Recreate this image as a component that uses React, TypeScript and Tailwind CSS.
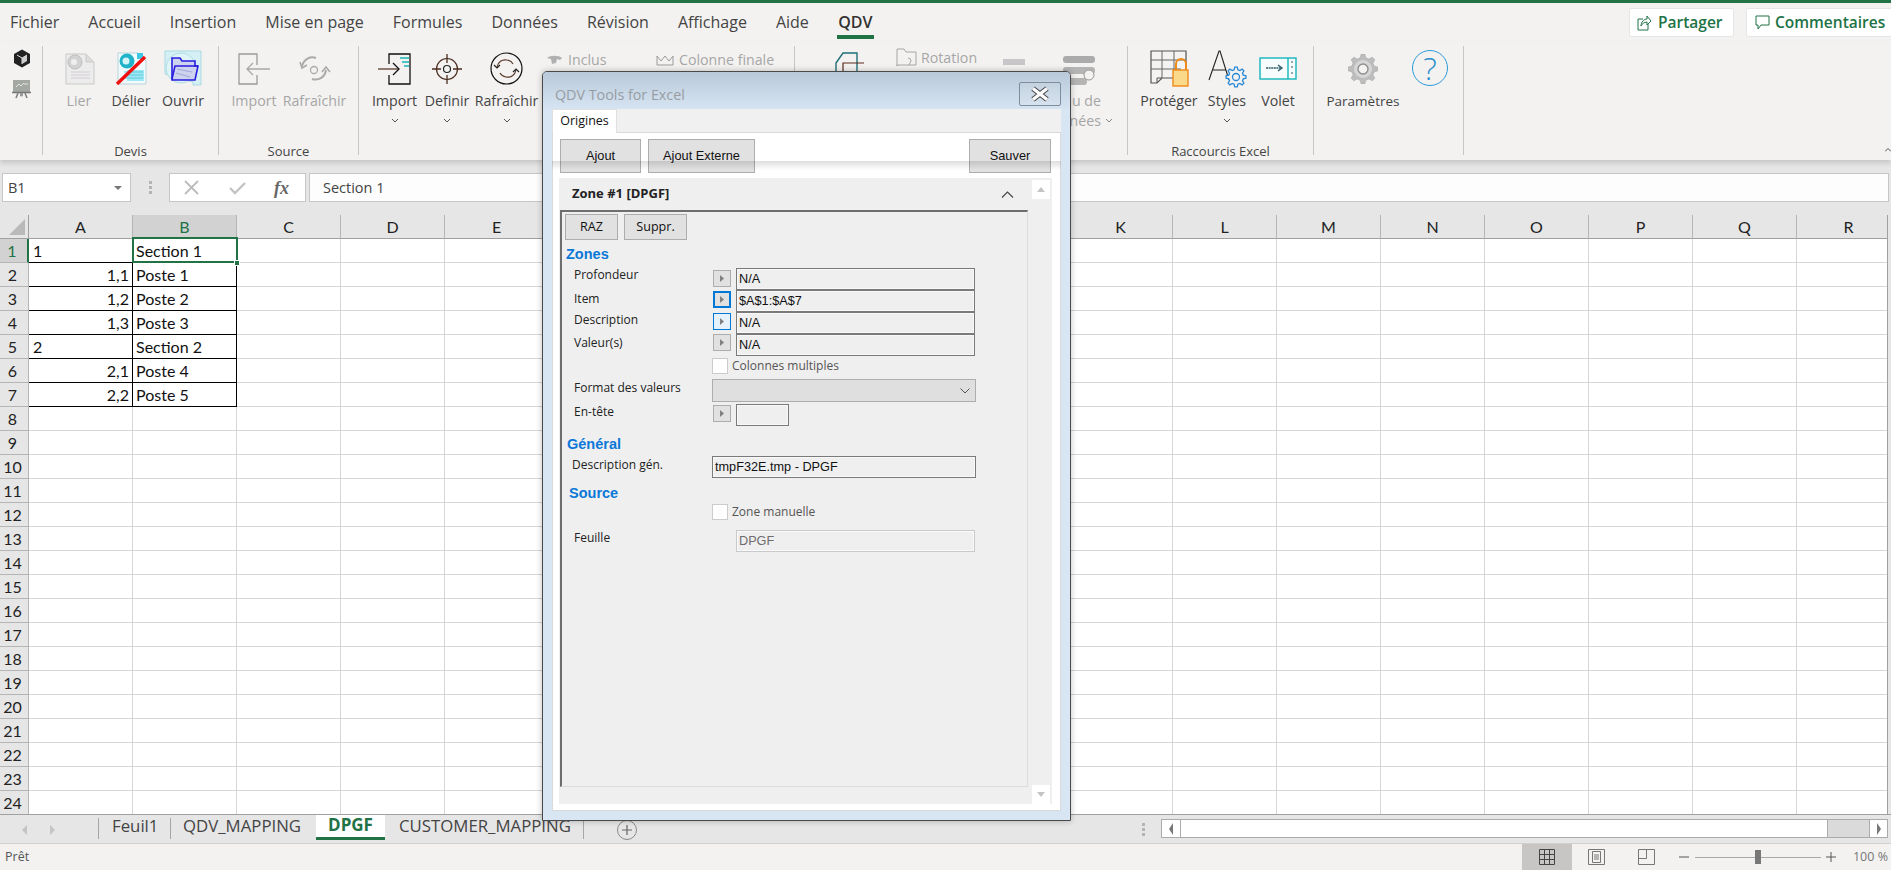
import React from "react";

const UI = "font-['Open_Sans',sans-serif]";
const CELL = "font-['Lato',sans-serif]";
const WIN = "font-['Liberation_Sans',Arial,sans-serif]";

function gear(cx: number, cy: number, ro: number, ri: number, n: number) {
  const pts: string[] = [];
  const step = (Math.PI * 2) / n;
  for (let i = 0; i < n; i++) {
    const a = i * step;
    const d = step * 0.22;
    [
      [a - d * 1.5, ri],
      [a - d * 0.7, ro],
      [a + d * 0.7, ro],
      [a + d * 1.5, ri],
    ].forEach(([t, r]) => pts.push(`${(cx + r * Math.cos(t)).toFixed(2)},${(cy + r * Math.sin(t)).toFixed(2)}`));
  }
  return pts.join(" ");
}

const Chev = ({ c = "#555" }: { c?: string }) => (
  <svg width="8" height="5" viewBox="0 0 8 5" className="block"><path d="M1 1l3 3 3-3" fill="none" stroke={c} strokeWidth="1" /></svg>
);

const RibBtn = ({ w, icon, label, gray, chevron, size = "text-[14.2px]" }: { w: string; icon: React.ReactNode; label: string; gray?: boolean; chevron?: boolean; size?: string }) => (
  <div className={`${w} shrink-0 flex flex-col items-center`}>
    <div className="h-[45px] flex items-center justify-center">{icon}</div>
    <div className={`h-[20px] leading-[20px] ${size} whitespace-nowrap ${gray ? "text-[#a6a6a6]" : "text-[#444444]"}`}>{label}</div>
    {chevron && <div className="h-[16px] flex items-center justify-center mt-[1px]"><Chev /></div>}
  </div>
);

const Sep = () => <div className="w-px h-[109px] shrink-0 bg-[#c8c6c4]" />;

const Group = ({ w, pl, label, children }: { w: string; pl: string; label?: string; children: React.ReactNode }) => (
  <div className={`${w} shrink-0 h-[113px] flex flex-col`}>
    <div className={`flex ${pl} h-[97px]`}>{children}</div>
    {label && <div className="h-[16px] leading-[16px] text-center text-[13px] text-[#444444] whitespace-nowrap">{label}</div>}
  </div>
);

const DocLier = () => (
  <svg width="32" height="32" viewBox="0 0 32 32" className="block">
    <path d="M3 1h20l8 8v22H3z" fill="#ececec" stroke="#c9c9c9" />
    <path d="M23 1v8h8" fill="#dcdcdc" stroke="#c9c9c9" />
    <circle cx="12" cy="9" r="7" fill="#d2d2d2" stroke="#bdbdbd" />
    <circle cx="11" cy="9" r="3" fill="#efefef" />
    <path d="M8 19h19M8 22h19M8 25h19" stroke="#d3cdd8" />
  </svg>
);
const DocDelier = () => (
  <svg width="32" height="33" viewBox="0 0 32 33" className="block">
    <path d="M3 1h20l8 8v23H3z" fill="#f1fbfd" stroke="#b9d3d8" />
    <path d="M22 1h6v6h-6z" fill="#3fc7e4" />
    <path d="M12 18h17v11H12z" fill="#9fe8f3" />
    <path d="M9 20h19M9 23h19M9 26h19" stroke="#5bcbe0" />
    <circle cx="12" cy="9" r="7.5" fill="#20b3c9" />
    <circle cx="11" cy="9" r="3.5" fill="#d3f4f8" />
    <path d="M2 32L30 5" stroke="#f01010" strokeWidth="3.4" />
  </svg>
);
const DocOuvrir = () => (
  <svg width="38" height="38" viewBox="0 0 38 38" className="block">
    <path d="M1 1h36v34H29v-3L1 24z" fill="#d5f0f4" stroke="#a9dbe3" />
    <circle cx="17" cy="18" r="15" fill="#dff4f7" stroke="#b0dde4" />
    <path d="M8 8h8l2 3h13v5h3l-3 14H8z" fill="#cdd3ee" stroke="#2a1de0" strokeWidth="1.6" />
    <path d="M8 29l3-13h23" fill="none" stroke="#2a1de0" strokeWidth="1.6" />
    <path d="M13 19l15 3M12 23l14 4" stroke="#9ea8d6" />
  </svg>
);
const ImportGray = () => (
  <svg width="32" height="32" viewBox="0 0 32 32" className="block" fill="none" stroke="#a8a8a8" strokeWidth="1.3">
    <path d="M19 12V1H1v30h18V22" stroke="#9a9a9a" />
    <path d="M32 16H9M15 10l-6 6 6 6" />
  </svg>
);
const RefreshGray = () => (
  <svg width="32" height="32" viewBox="0 0 32 32" className="block" fill="none" stroke="#aaaaaa" strokeWidth="2">
    <circle cx="15" cy="17" r="3.5" strokeWidth="1.3" />
    <path d="M3 13C5 6 11 3 17 5" />
    <path d="M1 9l2 6 5-3" strokeWidth="1.6" />
    <path d="M27 17c-1 7-7 11-14 9" />
    <path d="M31 19l-4-5-4 5" strokeWidth="1.6" />
  </svg>
);
const ImportDark = () => (
  <svg width="33" height="32" viewBox="0 0 33 32" className="block" fill="none">
    <path d="M11 11V1h21v30H11V22" stroke="#111" strokeWidth="1.3" />
    <path d="M0 16h21" stroke="#5a3a2a" strokeWidth="1.3" />
    <path d="M15 10l6 6-6 6" stroke="#111" strokeWidth="1.3" />
    <path d="M22 5h9M24 9h7M26 13h5" stroke="#19b5b5" strokeWidth="1.6" />
  </svg>
);
const Target = () => (
  <svg width="32" height="32" viewBox="0 0 32 32" className="block" fill="none" stroke="#4a2c1e" strokeWidth="1.2">
    <circle cx="16" cy="16" r="10.5" />
    <circle cx="16" cy="16" r="3.5" stroke="#222" />
    <path d="M16 1v9M16 22v9M1 16h9M22 16h9" strokeWidth="1.3" />
  </svg>
);
const RefreshDark = () => (
  <svg width="33" height="33" viewBox="0 0 33 33" className="block" fill="none">
    <circle cx="16.5" cy="16.5" r="15.5" stroke="#111" strokeWidth="1.2" />
    <path d="M7 15c1-5 5-8 10-7 3 .5 5 2 6 4" stroke="#5a3a2a" strokeWidth="1.2" />
    <path d="M26 18c-1 5-5 8-10 7-3-.5-5-2-6-4" stroke="#5a3a2a" strokeWidth="1.2" />
    <path d="M4 13l3 3 3-3M23 20l3-3 3 3" stroke="#222" strokeWidth="1.2" />
  </svg>
);
const Protect = () => (
  <svg width="39" height="37" viewBox="0 0 39 37" className="block" fill="none">
    <path d="M1 1h35v27H12l-5 5H1z" fill="#f4f3f1" stroke="#555" strokeWidth="1.2" />
    <path d="M1 10h35M1 19h30M12 1v27M24 1v20" stroke="#666" strokeWidth="1" />
    <path d="M7 33v-5h5" stroke="#555" />
    <path d="M26 21v-7a5 5 0 0110 0v7" stroke="#ee8a18" strokeWidth="2" />
    <rect x="23" y="20" width="15" height="16" fill="#fbd98b" stroke="#ee8a18" strokeWidth="1.4" />
  </svg>
);
const Styles = () => (
  <svg width="39" height="38" viewBox="0 0 39 38" className="block" fill="none">
    <path d="M1 30L11 1h1l9 29M5 20h13" stroke="#222" strokeWidth="1.1" />
    <polygon points={gear(28, 27, 10, 7.5, 8)} stroke="#2788d6" strokeWidth="1.3" fill="#f3f2f1" />
    <circle cx="28" cy="27" r="3.5" stroke="#2788d6" strokeWidth="1.3" />
  </svg>
);
const Volet = () => (
  <svg width="38" height="23" viewBox="0 0 38 23" className="block" fill="none">
    <rect x="1" y="1" width="36" height="21" fill="#f6fbfb" stroke="#15b6bd" strokeWidth="1.4" />
    <path d="M29 1v21" stroke="#15b6bd" strokeWidth="1.4" />
    <path d="M7 11h15" stroke="#2f5b66" strokeWidth="1.4" strokeDasharray="2 .6" />
    <path d="M19 8l4 3-4 3" stroke="#2f5b66" strokeWidth="1.3" />
    <path d="M32 5h2M32 10h2M32 16h2" stroke="#2f5b66" strokeWidth="1.2" />
  </svg>
);
const Settings = () => (
  <svg width="30" height="30" viewBox="0 0 30 30" className="block">
    <polygon points={gear(15, 15, 15, 11.5, 8)} fill="#bdbdbd" stroke="#a8a8a8" strokeWidth=".6" />
    <circle cx="15" cy="15" r="9" fill="#d6d6d6" />
    <circle cx="15" cy="15" r="5" fill="#f3f2f1" stroke="#8e8e8e" strokeWidth="1.4" />
  </svg>
);
const Cube = () => (
  <svg width="18" height="19" viewBox="0 0 18 19" className="block">
    <path d="M9 .5l8 4.5v9l-8 4.5-8-4.5V5z" fill="#222" />
    <path d="M4 6l5 3 5-3M9 9v6" stroke="#ddd" strokeWidth="1" fill="none" />
    <path d="M9 9l5-3v6l-5 3z" fill="#cfcfcf" />
  </svg>
);
const Board = () => (
  <svg width="19" height="20" viewBox="0 0 19 20" className="block">
    <rect x="1" y="1" width="17" height="12" fill="#a4a8a3" />
    <path d="M4 8l3-3 2 2 3-3M12 5h4" stroke="#e4e4e4" fill="none" />
    <path d="M0 13.5h19" stroke="#777" strokeWidth="1.5" />
    <path d="M4 19l2-5M15 19l-2-5M8 15h3" stroke="#808080" strokeWidth="1.6" />
    <circle cx="9.5" cy="16" r="1.6" fill="#9a9a9a" />
  </svg>
);
const SmallBtn = ({ active, hover }: { active?: boolean; hover?: boolean }) => (
  <div className={`w-[18px] shrink-0 flex items-center justify-center ${active ? "h-[17px] border-2 border-[#0078d7] bg-[#e1e1e1]" : hover ? "h-[17px] border border-[#0078d7] bg-[#e5f1fb]" : "h-[17px] border border-[#adadad] bg-[#e1e1e1]"}`}>
    <svg width="4" height="7" viewBox="0 0 4 7" className="block"><path d="M0 0l4 3.5L0 7z" fill="#808080" /></svg>
  </div>
);

const Field = ({ text, w = "w-[239px]", disabled }: { text: string; w?: string; disabled?: boolean }) => (
  <div className={`${w} h-[22px] shrink-0 border bg-[#efefef] shadow-[inset_0_0_0_1px_#f9f9f9] pl-[2px] leading-[21px] text-[12.7px] ${WIN} whitespace-nowrap ${disabled ? "border-[#c9c9c9] text-[#6d6d6d]" : "border-[#7a7a7a] text-[#111]"}`}>{text}</div>
);

const Lbl = ({ children, cls }: { children: React.ReactNode; cls: string }) => (
  <div className={`shrink-0 h-[16px] leading-[16px] text-[12px] text-[#222] whitespace-nowrap ${cls}`}>{children}</div>
);

const ZoneRow = ({ label, top, btnTop, text, active, hover }: { label: string; top: string; btnTop: string; text: string; active?: boolean; hover?: boolean }) => (
  <div className="flex h-[22px] pl-[12px]">
    <Lbl cls={`w-[139px] ${top}`}>{label}</Lbl>
    <div className={`mr-[5px] ${btnTop}`}><SmallBtn active={active} hover={hover} /></div>
    <Field text={text} />
  </div>
);

const Head = ({ children, cls }: { children: React.ReactNode; cls: string }) => (
  <div className={`h-[18px] leading-[18px] text-[14.5px] font-bold text-[#0a78d8] ${WIN} ${cls}`}>{children}</div>
);

const Check = ({ label, cls }: { label: string; cls: string }) => (
  <div className={`flex items-center h-[16px] pl-[150px] ${cls}`}>
    <div className="w-[16px] h-[16px] bg-white border border-[#cccccc] mr-[4px]" />
    <span className="text-[12px] text-[#555] whitespace-nowrap">{label}</span>
  </div>
);

const WinBtn = ({ w, label, cls = "" }: { w: string; label: string; cls?: string }) => (
  <div className={`${w} h-[34px] border border-[#adadad] bg-[#e1e1e1] flex items-center justify-center text-[12.8px] text-[#111] ${WIN} ${cls}`}>{label}</div>
);

const cols = "ABCDEFGHIJKLMNOPQR".split("");
const data: Record<number, [string, string, boolean]> = {
  1: ["1", "Section 1", false],
  2: ["1,1", "Poste 1", true],
  3: ["1,2", "Poste 2", true],
  4: ["1,3", "Poste 3", true],
  5: ["2", "Section 2", false],
  6: ["2,1", "Poste 4", true],
  7: ["2,2", "Poste 5", true],
};
const rows = Array.from({ length: 24 }, (_, i) => i + 1);

const Sheet = () => (
  <div className={`relative w-[1888px] h-[599px] overflow-hidden border-r border-[#a0a0a0] bg-white ${CELL} text-[16px] text-[#111]`}>
    <div className="grid grid-cols-[29px_repeat(18,104px)] grid-rows-[24px_repeat(24,24px)] w-[1901px]">
      <div className="bg-[#e6e6e6] border-b border-r border-[#a0a0a0] flex items-end justify-end pr-[3px] pb-[3px]">
        <div className="w-0 h-0 border-l-[16px] border-l-transparent border-b-[16px] border-b-[#b9b9b9]" />
      </div>
      {cols.map((c) => (
        <div key={c} className={`border-b border-r border-[#a0a0a0] border-r-[#b5b5b5] flex items-center justify-center leading-none ${c === "B" ? "bg-[#d2d2d2] text-[#217346]" : "bg-[#e6e6e6] text-[#222]"}`}>{c}</div>
      ))}
      {rows.map((r) => (
        <React.Fragment key={r}>
          <div className={`border-b border-r border-[#b5b5b5] flex items-center justify-center pr-[3px] leading-none ${r === 1 ? "bg-[#d2d2d2] text-[#217346] border-r-[#217346] border-r-2" : "bg-[#e6e6e6] text-[#222]"}`}>{r}</div>
          {cols.map((c) => {
            const d = data[r];
            const inTable = !!d && (c === "A" || c === "B");
            return (
              <div key={c} className={`border-b border-r flex items-center leading-none whitespace-nowrap ${inTable ? "border-[#000]" : "border-[#d6d6d6]"} ${d && c === "A" ? (d[2] ? "justify-end pr-[3px]" : "pl-[4px]") : "pl-[3px]"}`}>
                {d && c === "A" ? d[0] : d && c === "B" ? d[1] : ""}
              </div>
            );
          })}
        </React.Fragment>
      ))}
    </div>
    <div className="absolute left-[132px] top-[22px] w-[106px] h-[26px] border-2 border-[#217346]" />
    <div className="absolute left-[234px] top-[45px] w-[4px] h-[4px] bg-[#217346] border border-white box-content" />
  </div>
);

const Dialog = () => (
  <div className={`absolute z-20 left-[542px] top-[71px] w-[529px] h-[750px] flex flex-col rounded-t-[5px] border border-[#4a4a4a] bg-[#d8e5f3] shadow-[0_0_6px_rgba(0,0,0,0.25)] ${UI}`}>
    <div className="h-[37px] shrink-0 flex items-start justify-between rounded-t-[4px] bg-gradient-to-b from-[#b9c9d9] to-[#d6e4f2]">
      <div className={`mt-[14px] ml-[12px] text-[14.3px] leading-[18px] text-[#979da3] ${UI}`}>QDV Tools for Excel</div>
      <div className="mt-[10px] mr-[9px] w-[42px] h-[24px] rounded-[2px] border border-[#7f8c9c] bg-gradient-to-b from-[#c4d2e0] to-[#d6e2ee] flex items-center justify-center">
        <svg width="20" height="16" viewBox="0 0 20 16" className="block">
          <path d="M3 2.5l14 11M17 2.5L3 13.5" stroke="#444" strokeWidth="5.4" />
          <path d="M3 2.5l14 11M17 2.5L3 13.5" stroke="#fff" strokeWidth="3.4" />
        </svg>
      </div>
    </div>
    <div className="mx-[9px] mb-[9px] flex-1 flex flex-col min-h-0">
      <div className="h-[24px] shrink-0 bg-[#f0f0f0] border-b border-[#d9d9d9]">
        <div className="w-[65px] h-[24px] bg-white border-x border-t border-[#e0e0e0] flex items-center justify-center text-[12.5px] text-[#111]">Origines</div>
      </div>
      <div className="flex-1 bg-white border-x border-b border-[#d9d9d9] flex flex-col px-[6px] min-h-0">
        <div className="flex shrink-0 mt-[6px] pl-[1px] pr-[3px]">
          <WinBtn w="w-[81px]" label="Ajout" />
          <WinBtn w="w-[107px] ml-[7px]" label="Ajout Externe" />
          <WinBtn w="w-[82px] ml-auto" label="Sauver" />
        </div>
        <div className="mt-[5px] flex-1 min-h-0 flex bg-[#efefef] mb-[6px] overflow-hidden mr-[2px]">
          <div className="w-[469px] shrink-0 flex flex-col">
            <div className="h-[32px] shrink-0 flex items-center justify-between pl-[13px] pr-[14px]">
              <span className="text-[13px] font-bold text-[#222]">Zone #1 [DPGF]</span>
              <svg width="13" height="7" viewBox="0 0 13 7" className="block"><path d="M1 6.5l5.5-5.5L12 6.5" fill="none" stroke="#444" strokeWidth="1.1" /></svg>
            </div>
            <div className="h-[577px] ml-[1px] border-t-2 border-l-2 border-t-[#6e6e6e] border-l-[#6e6e6e] border-r border-b border-r-[#dcdcdc] border-b-[#dcdcdc] flex flex-col">
              <div className="flex h-[26px] mt-[2px] ml-[3px]">
                <div className={`w-[53px] border border-[#adadad] bg-[#e1e1e1] flex items-center justify-center text-[12.6px] ${UI} text-[#111]`}>RAZ</div>
                <div className={`w-[63px] ml-[6px] border border-[#adadad] bg-[#e1e1e1] flex items-center justify-center text-[12.6px] ${UI} text-[#111]`}>Suppr.</div>
              </div>
              <Head cls="mt-[5px] pl-[4px]">Zones</Head>
              <div className="mt-[5px]">
                <ZoneRow label="Profondeur" top="-mt-[1px]" btnTop="mt-[2px]" text="N/A" />
                <ZoneRow label="Item" top="mt-[1px]" btnTop="mt-[1px]" text="$A$1:$A$7" active />
                <ZoneRow label="Description" top="" btnTop="mt-[1px]" text="N/A" hover />
                <ZoneRow label="Valeur(s)" top="mt-[1px]" btnTop="" text="N/A" />
              </div>
              <Check label="Colonnes multiples" cls="mt-[2px]" />
              <div className="flex h-[23px] mt-[5px] pl-[12px]">
                <Lbl cls="w-[138px] mt-[1px]">Format des valeurs</Lbl>
                <div className="w-[264px] h-[23px] border border-[#adadad] bg-[#dfdfdf] flex items-center justify-end pr-[5px]">
                  <svg width="10" height="6" viewBox="0 0 10 6" className="block"><path d="M.5.5L5 5 9.5.5" fill="none" stroke="#555" /></svg>
                </div>
              </div>
              <div className="flex h-[22px] mt-[2px] pl-[12px]">
                <Lbl cls="w-[139px]">En-tête</Lbl>
                <div className="mr-[5px] mt-[1px]"><SmallBtn /></div>
                <Field text="" w="w-[53px]" />
              </div>
              <Head cls="mt-[9px] pl-[5px]">Général</Head>
              <div className="flex h-[22px] mt-[3px] pl-[10px]">
                <Lbl cls="w-[140px] mt-[1px]">Description gén.</Lbl>
                <Field text="tmpF32E.tmp - DPGF" w="w-[264px]" />
              </div>
              <Head cls="mt-[6px] pl-[7px]">Source</Head>
              <Check label="Zone manuelle" cls="mt-[2px]" />
              <div className="flex h-[22px] mt-[10px] pl-[12px]">
                <Lbl cls="w-[162px]">Feuille</Lbl>
                <Field text="DPGF" disabled />
              </div>
            </div>
          </div>
          <div className="w-[18px] ml-[4px] flex flex-col justify-between pt-[2px]">
            <div className="h-[19px] bg-white flex items-center justify-center">
              <div className="w-0 h-0 border-x-[4px] border-x-transparent border-b-[5px] border-b-[#c4c4c4]" />
            </div>
            <div className="h-[19px] bg-white flex items-center justify-center">
              <div className="w-0 h-0 border-x-[4px] border-x-transparent border-t-[5px] border-t-[#c4c4c4]" />
            </div>
          </div>
        </div>
      </div>
    </div>
    <div className="absolute left-[9px] right-[9px] top-[89px] h-[9px] bg-gradient-to-b from-[rgba(0,0,0,0.13)] to-transparent pointer-events-none" />
  </div>
);

const menu = ["Fichier", "Accueil", "Insertion", "Mise en page", "Formules", "Données", "Révision", "Affichage", "Aide"];

export default function App() {
  return (
    <div className={`relative w-[1891px] h-[870px] overflow-hidden flex flex-col bg-[#e6e6e6] ${UI}`}>
      <div className="h-[3px] shrink-0 bg-[#217346]" />
      {/* Menu */}
      <div className="h-[39px] shrink-0 bg-[#f3f2f1] flex items-start pl-[10px] pt-[8px]">
        <div className="flex gap-[29px] text-[16px] leading-[22px] text-[#444]">
          {menu.map((m) => <span key={m} className="whitespace-nowrap">{m}</span>)}
          <div className="flex flex-col items-center ml-[-1px] h-[28px]">
            <span className="font-semibold text-[#333] leading-[22px]">QDV</span>
            <div className="w-[37px] h-[4px] mt-[2px] bg-[#217346]" />
          </div>
        </div>
        <div className="ml-auto flex gap-[12px] -mt-[3px]">
          <div className="w-[105px] h-[29px] rounded-[2px] bg-white border border-[#e6e6e6] flex items-center pl-[7px] gap-[7px] text-[15.5px] font-semibold text-[#217346]">
            <svg width="14" height="16" viewBox="0 0 14 16" className="block" fill="none" stroke="#217346"><path d="M6 4H1v11h10V9" /><path d="M4 11c0-4 3-7 6-7V1l4 5-4 4V7c-3 0-5 2-6 4z" /></svg>
            Partager
          </div>
          <div className="w-[146px] h-[29px] rounded-[2px] bg-white border border-[#e6e6e6] flex items-center pl-[8px] gap-[5px] text-[15.5px] font-semibold text-[#217346] whitespace-nowrap mr-[-1px]">
            <svg width="15" height="15" viewBox="0 0 15 15" className="block" fill="none" stroke="#217346"><path d="M1 1h13v9H6l-3 4v-4H1z" /></svg>
            Commentaires
          </div>
        </div>
      </div>
      {/* Ribbon */}
      <div className="relative h-[118px] shrink-0 bg-[#f3f2f1] pt-[4px] flex items-start shadow-[0_3px_5px_rgba(0,0,0,0.14)] z-10">
        <div className="w-[42px] shrink-0 h-[109px] flex flex-col items-center gap-[11px] pt-[3px] pl-[1px]">
          <Cube />
          <Board />
        </div>
        <Sep />
        <Group w="w-[175px]" pl="pl-[10px]" label="Devis">
          <RibBtn w="w-[52px]" icon={<DocLier />} label="Lier" gray />
          <RibBtn w="w-[52px]" icon={<DocDelier />} label="Délier" />
          <RibBtn w="w-[52px]" icon={<DocOuvrir />} label="Ouvrir" />
        </Group>
        <Sep />
        <Group w="w-[139px]" pl="pl-[5px]" label="Source">
          <RibBtn w="w-[60px]" icon={<ImportGray />} label="Import" gray />
          <RibBtn w="w-[61px]" icon={<RefreshGray />} label="Rafraîchir" gray />
        </Group>
        <Sep />
        <div className="w-[435px] shrink-0 h-[113px] flex pl-[9px]">
          <RibBtn w="w-[53px]" icon={<ImportDark />} label="Import" chevron />
          <RibBtn w="w-[52px]" icon={<Target />} label="Definir" chevron />
          <RibBtn w="w-[67px]" icon={<RefreshDark />} label="Rafraîchir" chevron />
          <div className="flex items-start ml-[7px] mt-[3px] pt-[1px] text-[14.2px] text-[#a6a6a6] leading-[20px]">
            <svg width="15" height="10" viewBox="0 0 15 10" className="block mt-[5px] mr-[6px]"><path d="M0 3c3-3 12-3 15 0l-2 2-3-1-1 4-4 1-1-5z" fill="#b0b0b0" /></svg>
            <span className="w-[88px]">Inclus</span>
            <svg width="18" height="11" viewBox="0 0 18 11" className="block mt-[5px] mr-[5px]" fill="none" stroke="#9b9b9b"><path d="M1 1l4 5 4-5 4 5 4-5v9H1z" /></svg>
            <span className="whitespace-nowrap">Colonne finale</span>
          </div>
        </div>
        <Sep />
        <div className="w-[332px] shrink-0 h-[113px] flex items-start pl-[40px]">
          <svg width="30" height="36" viewBox="0 0 30 36" className="block mt-[6px]" fill="none"><path d="M1 11L8 1h14v30H1z" stroke="#1f6f78" strokeWidth="1.4" /><path d="M8 25V11h21M14 6" stroke="#5a2a1a" strokeWidth="1.2" /></svg>
          <svg width="21" height="21" viewBox="0 0 21 21" className="block ml-[31px] mt-[2px]" fill="none" stroke="#a6a6a6"><path d="M1 18V1h7l2 3h10v13H1z" /><path d="M12 10a3 3 0 013 3l-2 4" /></svg>
          <span className="ml-[4px] mt-[2px] text-[14.2px] leading-[20px] text-[#a6a6a6]">Rotation</span>
          <div className="w-[22px] h-[6px] ml-[26px] mt-[13px] bg-[#c9c6c9]" />
          <div className="ml-[38px] flex flex-col items-end">
            <svg width="32" height="30" viewBox="0 0 32 30" className="block mt-[10px]">
              <rect x="0" y="0" width="32" height="7" rx="3" fill="#ababab" />
              <rect x="0" y="11" width="32" height="7" rx="3" fill="#b4b4b4" />
              <rect x="0" y="22" width="24" height="7" rx="3" fill="#b4b4b4" />
              <circle cx="26" cy="19" r="5" fill="#f3f2f1" stroke="#999" />
            </svg>
          </div>
          <div className="absolute left-[1015px] top-[49px] w-[86px] text-right text-[14.2px] leading-[20px] text-[#a6a6a6] whitespace-nowrap">
            <div className="h-[20px]">Tableau de</div>
            <div className="h-[20px] flex items-center justify-end">données</div>
          </div>
          <div className="absolute left-[1105px] top-[76px]"><Chev c="#888" /></div>
        </div>
        <Sep />
        <Group w="w-[185px]" pl="pl-[12px]" label="Raccourcis Excel">
          <RibBtn w="w-[58px]" icon={<Protect />} label="Protéger" />
          <RibBtn w="w-[58px]" icon={<Styles />} label="Styles" chevron />
          <RibBtn w="w-[44px]" icon={<Volet />} label="Volet" />
        </Group>
        <Sep />
        <div className="w-[149px] shrink-0 h-[113px] flex pl-[12px]">
          <RibBtn w="w-[74px]" icon={<Settings />} label="Paramètres" size="text-[13.5px]" />
          <div className="w-[60px] flex justify-center">
            <div className={`mt-[4px] w-[36px] h-[36px] rounded-full border-[1.5px] border-[#2a9bdc] flex items-center justify-center text-[32px] leading-none font-light text-[#2a8fcc] ${UI}`}>?</div>
          </div>
        </div>
        <Sep />
        <div className="absolute right-[0px] top-[106px]"><svg width="6" height="4" viewBox="0 0 6 4" className="block"><path d="M0 3.5L3 .5l3 3" fill="none" stroke="#555" /></svg></div>
      </div>
      {/* Formula bar */}
      <div className="h-[55px] shrink-0 flex items-start pt-[13px] bg-[#e6e6e6]">
        <div className="w-[129px] h-[29px] ml-[2px] bg-white border border-[#c6c6c6] flex items-center justify-between pl-[5px] pr-[8px] text-[14.5px] text-[#444]">
          B1
          <div className="w-0 h-0 border-x-[4px] border-x-transparent border-t-[4px] border-t-[#777]" />
        </div>
        <div className="w-[38px] h-[29px] flex items-center justify-center">
          <div className="flex flex-col gap-[2px]">
            <div className="w-[3px] h-[3px] bg-[#b4b4b4]" /><div className="w-[3px] h-[3px] bg-[#b4b4b4]" /><div className="w-[3px] h-[3px] bg-[#b4b4b4]" />
          </div>
        </div>
        <div className="w-[137px] h-[29px] bg-white border border-[#c6c6c6] flex items-center">
          <svg width="15" height="15" viewBox="0 0 15 15" className="block ml-[14px]"><path d="M1 1l13 13M14 1L1 14" stroke="#bcbcbc" strokeWidth="1.8" /></svg>
          <svg width="17" height="14" viewBox="0 0 17 14" className="block ml-[30px]"><path d="M1 7l5 5L16 2" fill="none" stroke="#c4c4c4" strokeWidth="2.4" /></svg>
          <span className="ml-[28px] text-[18px] italic font-bold text-[#666] font-['Liberation_Serif',serif] leading-none">fx</span>
        </div>
        <div className="flex-1 h-[29px] ml-[3px] mr-[2px] bg-[#fdfdfd] border border-[#c6c6c6] pl-[13px] leading-[27px] text-[14.5px] text-[#444]">Section 1</div>
      </div>
      <Sheet />
      {/* Sheet tabs */}
      <div className="h-[29px] shrink-0 border-t border-[#a0a0a0] bg-[#e6e6e6] flex items-start text-[16.8px] text-[#444]">
        <div className="w-[98px] h-[24px] mt-[3px] flex items-center pl-[22px] gap-[23px]">
          <div className="w-0 h-0 border-y-[5px] border-y-transparent border-r-[5px] border-r-[#c4c4c4]" />
          <div className="w-0 h-0 border-y-[5px] border-y-transparent border-l-[5px] border-l-[#c4c4c4]" />
        </div>
        <div className="h-[21px] mt-[3px] border-l border-[#a6a6a6] pl-[13px] w-[72px] leading-[16px] whitespace-nowrap">Feuil1</div>
        <div className="h-[21px] mt-[3px] border-l border-[#a6a6a6] pl-[12px] w-[146px] leading-[16px] whitespace-nowrap">QDV_MAPPING</div>
        <div className="w-[69px] h-[25px] bg-white border-b-[3px] border-[#217346] text-center font-bold text-[#217346] text-[17px] leading-[20px]">DPGF</div>
        <div className="h-[21px] mt-[3px] border-r border-[#a6a6a6] pl-[14px] w-[199px] leading-[16px] whitespace-nowrap">CUSTOMER_MAPPING</div>
        <div className="w-[20px] h-[20px] mt-[5px] ml-[33px] rounded-full border border-[#8a8a8a] flex items-center justify-center">
          <svg width="10" height="10" viewBox="0 0 10 10" className="block"><path d="M5 0v10M0 5h10" stroke="#666" strokeWidth="1.2" /></svg>
        </div>
        <div className="ml-auto flex items-start mt-[4px]">
          <div className="flex flex-col gap-[2px] mr-[16px] mt-[4px]">
            <div className="w-[3px] h-[3px] bg-[#b4b4b4]" /><div className="w-[3px] h-[3px] bg-[#b4b4b4]" /><div className="w-[3px] h-[3px] bg-[#b4b4b4]" />
          </div>
          <div className="w-[727px] h-[19px] mr-[3px] flex border border-[#ababab] bg-[#dadada]">
            <div className="w-[19px] bg-white border-r border-[#ababab] flex items-center justify-center"><div className="w-0 h-0 border-y-[6px] border-y-transparent border-r-[4px] border-r-[#777]" /></div>
            <div className="w-[647px] bg-white border-r border-[#ababab]" />
            <div className="flex-1" />
            <div className="w-[18px] bg-white border-l border-[#ababab] flex items-center justify-center"><div className="w-0 h-0 border-y-[6px] border-y-transparent border-l-[4px] border-l-[#777]" /></div>
          </div>
        </div>
      </div>
      {/* Status bar */}
      <div className="h-[27px] shrink-0 border-t border-[#d0d0d0] bg-[#f3f2f1] flex items-center text-[12.5px] text-[#555]">
        <span className="ml-[5px]">Prêt</span>
        <div className="ml-auto flex items-center h-full">
          <div className="w-[50px] h-full bg-[#c8c6c4] flex items-center justify-center">
            <svg width="16" height="16" viewBox="0 0 16 16" className="block"><path d="M.5.5h15v15H.5zM5.5.5v15M10.5.5v15M.5 5.5h15M.5 10.5h15" fill="none" stroke="#444" /></svg>
          </div>
          <div className="w-[50px] flex justify-center">
            <svg width="17" height="16" viewBox="0 0 17 16" className="block"><path d="M.5.5h16v15H.5z" fill="none" stroke="#777" /><path d="M4.5 2.5h8v11h-8z" fill="none" stroke="#777" /><path d="M6 6h5M6 8h5M6 10h5" stroke="#777" /></svg>
          </div>
          <div className="w-[50px] flex justify-center">
            <svg width="17" height="16" viewBox="0 0 17 16" className="block"><path d="M.5.5h16v15H.5zM.5 9.5h8V.5" fill="none" stroke="#777" /></svg>
          </div>
          <svg width="10" height="2" viewBox="0 0 10 2" className="block ml-[7px]"><path d="M0 1h10" stroke="#555" /></svg>
          <div className="relative w-[126px] h-[14px] ml-[6px] flex items-center">
            <div className="w-full h-px bg-[#a8a8a8]" />
            <div className="absolute left-[60px] top-0 w-[6px] h-[14px] bg-[#777]" />
          </div>
          <svg width="10" height="10" viewBox="0 0 10 10" className="block ml-[5px]"><path d="M5 0v10M0 5h10" stroke="#555" /></svg>
          <span className="ml-[17px] mr-[3px] text-[#777] whitespace-nowrap">100 %</span>
        </div>
      </div>
      <Dialog />
    </div>
  );
}
